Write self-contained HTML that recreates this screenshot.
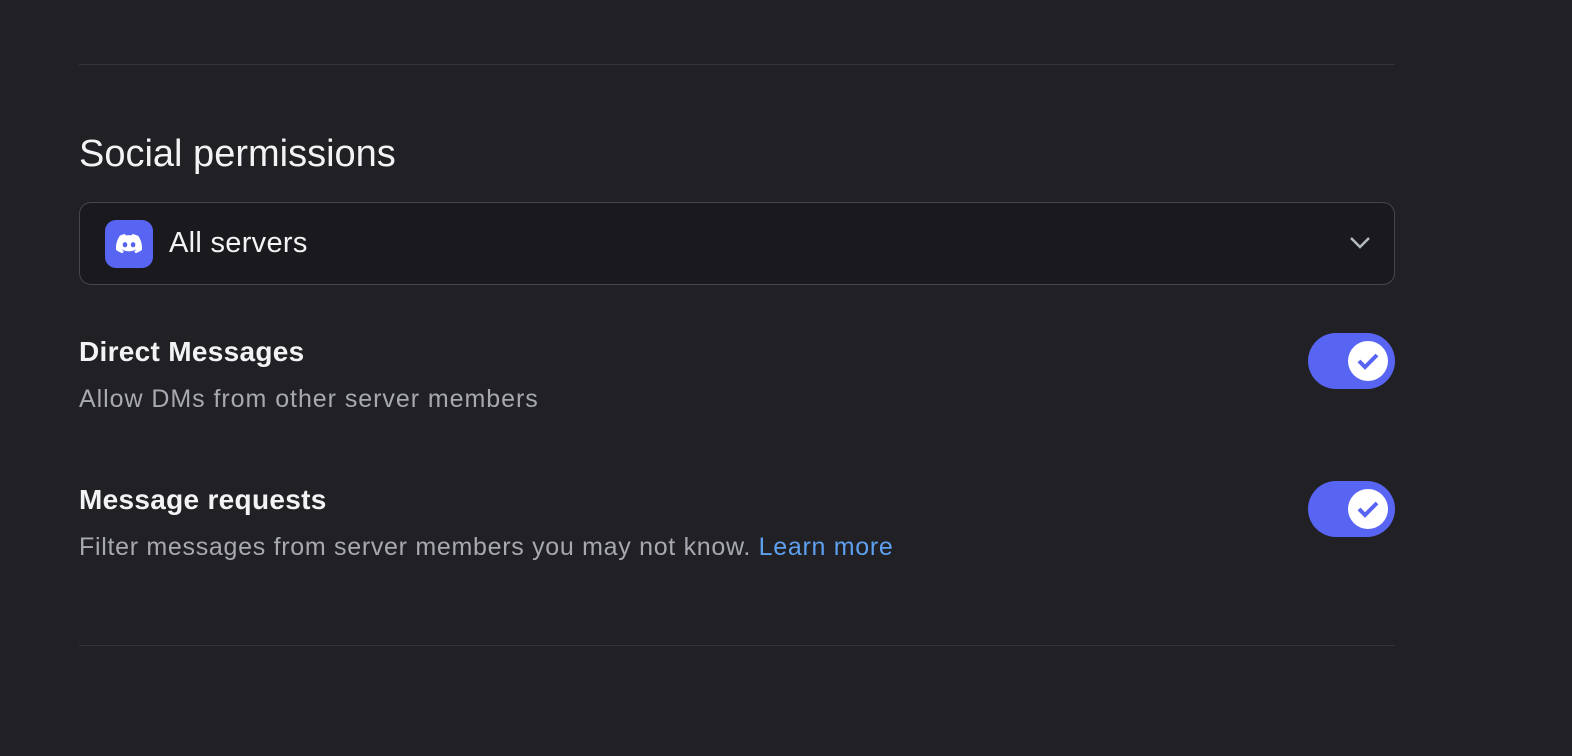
<!DOCTYPE html>
<html><head><style>
body{margin:0;width:1572px;height:756px;background:#202025;font-family:"Liberation Sans",sans-serif;position:relative;overflow:hidden;color:#f2f3f5}
.hr{position:absolute;left:79px;width:1316px;height:1px;background:#34343a}
.abs{position:absolute;white-space:nowrap}
.dd{position:absolute;left:79px;top:202px;width:1314px;height:81px;border:1px solid #45454c;border-radius:12px;background:#1a1a1e}
.tg{position:absolute;left:1308px;width:87px;height:56px;border-radius:28px;background:#5865f2}
.kn{position:absolute;left:40px;top:8px;width:40px;height:40px;border-radius:50%;background:#fff}
.sub{font-size:25px;color:#a7a9b0;letter-spacing:0.7px}
</style></head><body>
<div class="hr" style="top:64px"></div>
<div class="abs" style="left:79px;top:133px;font-size:38px;font-weight:500">Social permissions</div>
<div class="dd">
  <div style="position:absolute;left:25px;top:17px;width:48px;height:48px;border-radius:11px;background:#5865f2">
    <svg width="48" height="48" viewBox="0 0 48 48"><path fill="#fff" d="M32.5 15.6a21 21 0 0 0-5.2-1.6l-.7 1.4a19.5 19.5 0 0 0-5.8 0l-.7-1.4a21 21 0 0 0-5.2 1.6C11.6 20.5 10.7 25.3 11.1 30a21 21 0 0 0 6.4 3.2l1.4-2.2a13 13 0 0 1-2.2-1l.5-.4a15 15 0 0 0 13.6 0l.5.4c-.7.4-1.4.7-2.2 1l1.4 2.2a21 21 0 0 0 6.4-3.2c.5-5.5-.9-10.2-3.9-14.4zM20 27.3c-1.3 0-2.3-1.2-2.3-2.6s1-2.6 2.3-2.6 2.3 1.2 2.3 2.6-1 2.6-2.3 2.6zm8.1 0c-1.3 0-2.3-1.2-2.3-2.6s1-2.6 2.3-2.6 2.3 1.2 2.3 2.6-1 2.6-2.3 2.6z"/></svg>
  </div>
  <div class="abs" style="left:89px;top:24px;font-size:29px;color:#f2f3f5;letter-spacing:0.3px">All servers</div>
  <svg style="position:absolute;left:1268px;top:32px" width="24" height="16" viewBox="0 0 24 16"><path d="M3 3l9 9 9-9" fill="none" stroke="#b5bac1" stroke-width="2.5"/></svg>
</div>
<div class="abs" style="left:79px;top:336px;font-size:28px;font-weight:bold;letter-spacing:0.3px">Direct Messages</div>
<div class="abs sub" style="left:79px;top:385px;letter-spacing:0.95px">Allow DMs from other server members</div>
<div class="tg" style="top:333px"><div class="kn"><svg width="40" height="40" viewBox="0 0 40 40"><path d="M11 20l6 6 12-12" fill="none" stroke="#5865f2" stroke-width="4"/></svg></div></div>
<div class="abs" style="left:79px;top:484px;font-size:28px;font-weight:bold;letter-spacing:0.3px">Message requests</div>
<div class="abs sub" style="left:79px;top:533px">Filter messages from server members you may not know. <span style="color:#5ea0f0">Learn more</span></div>
<div class="tg" style="top:481px"><div class="kn"><svg width="40" height="40" viewBox="0 0 40 40"><path d="M11 20l6 6 12-12" fill="none" stroke="#5865f2" stroke-width="4"/></svg></div></div>
<div class="hr" style="top:645px"></div>
</body></html>
